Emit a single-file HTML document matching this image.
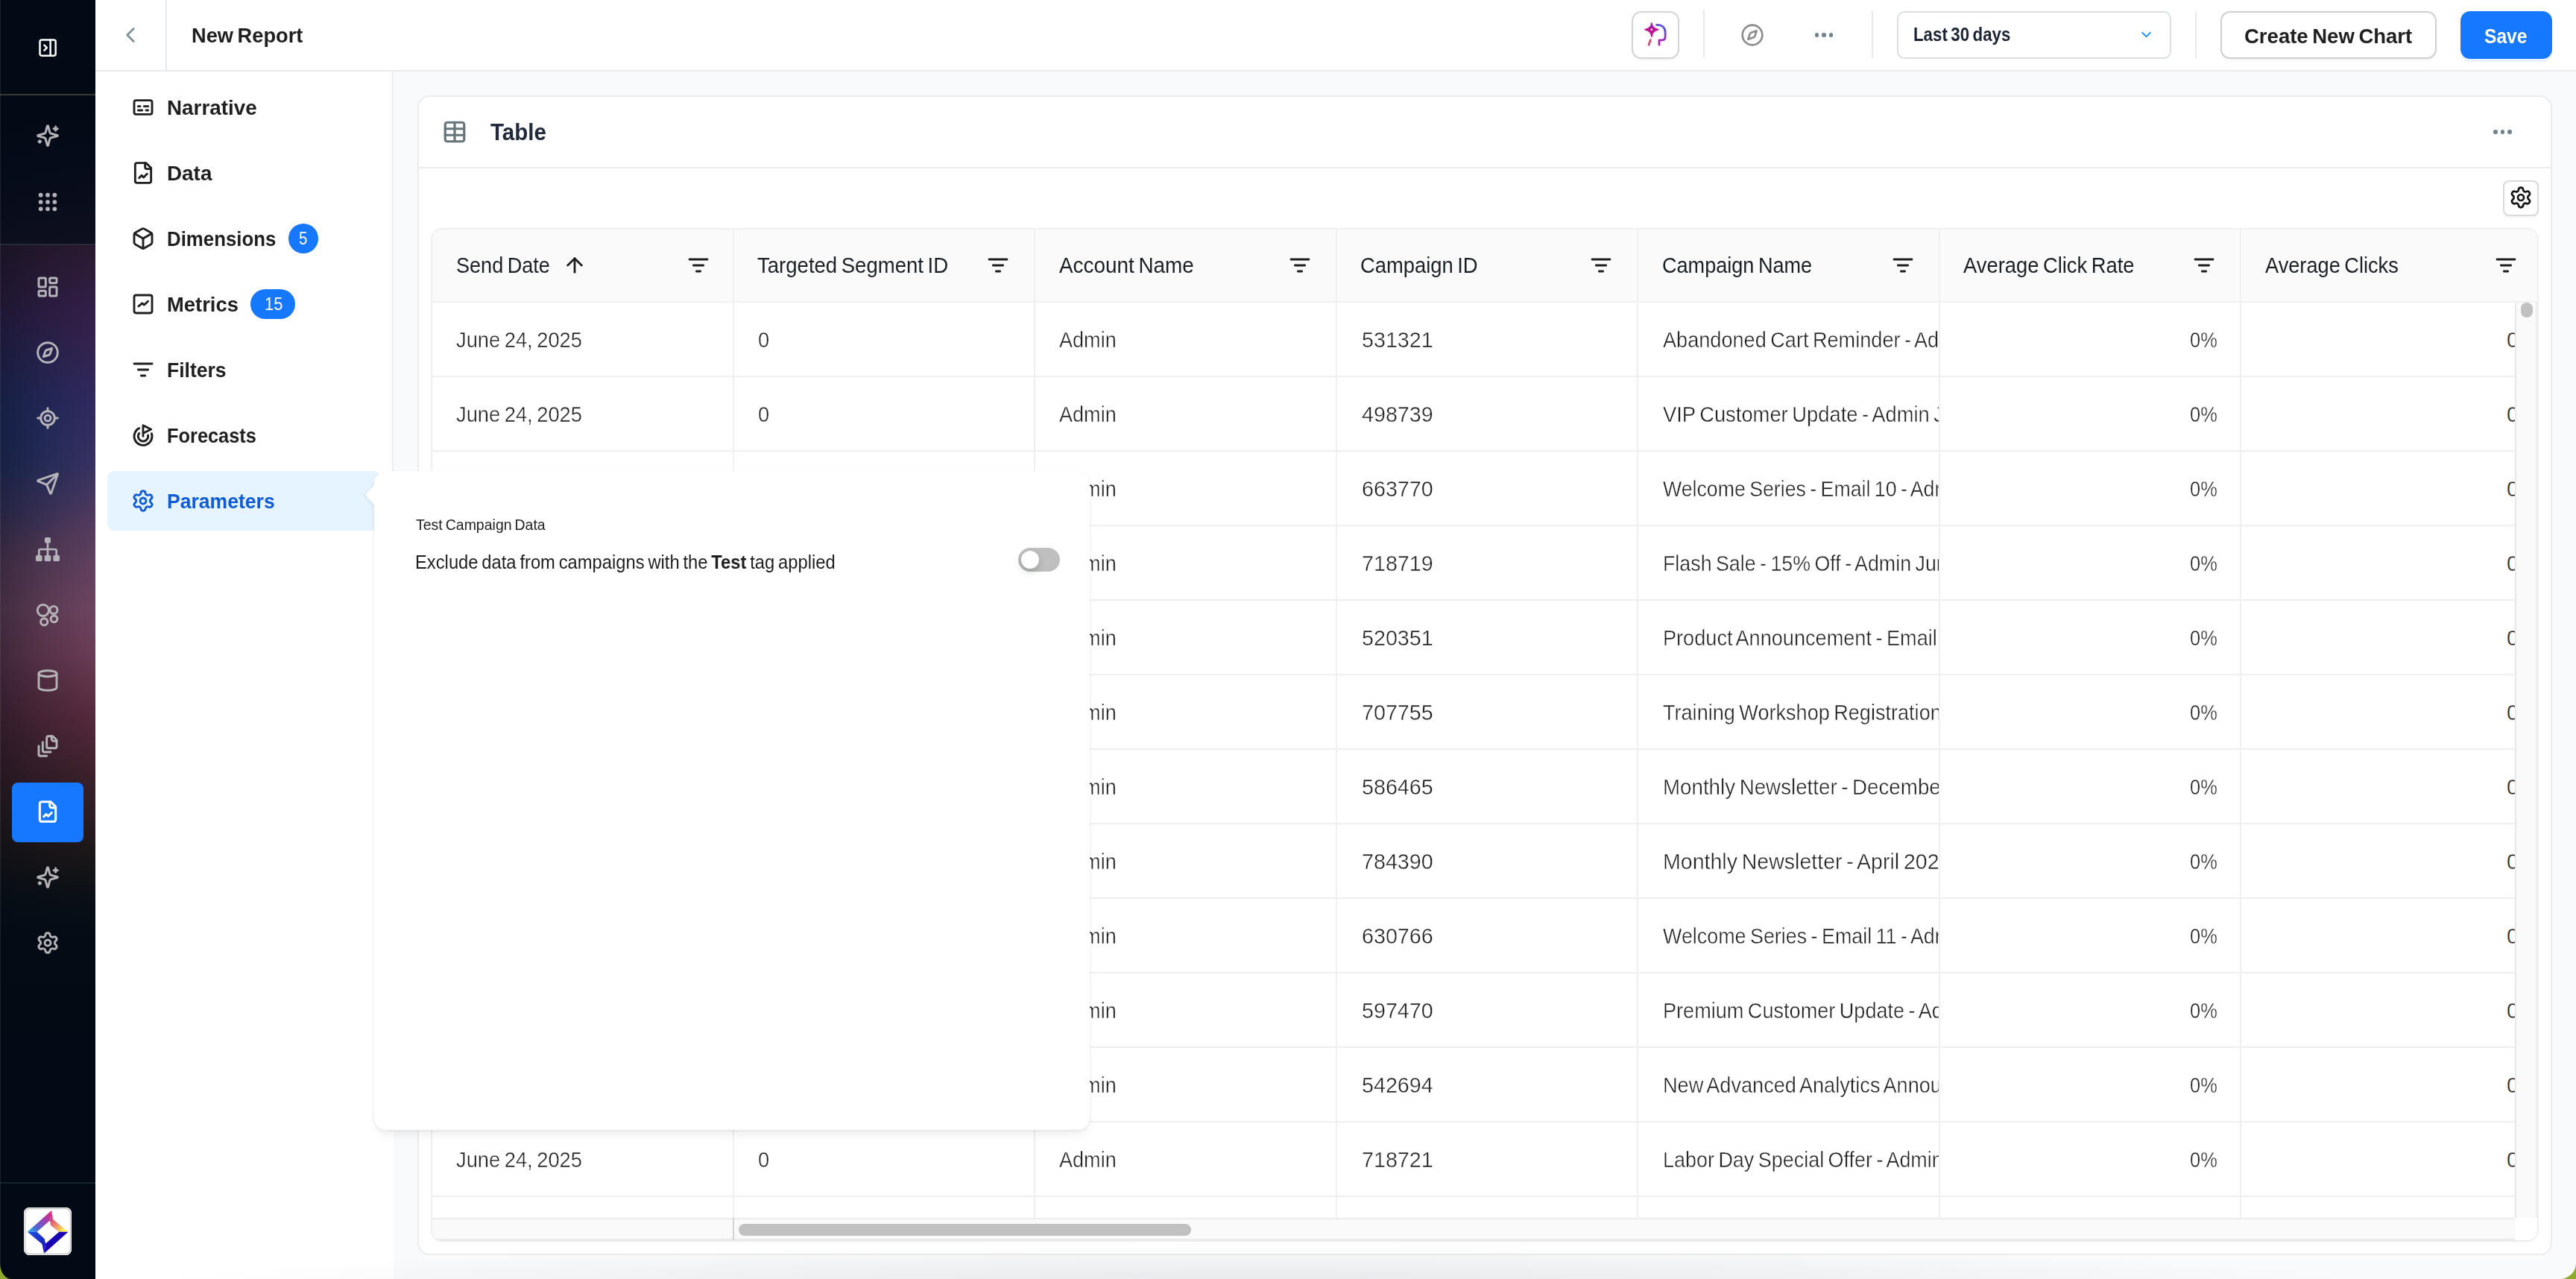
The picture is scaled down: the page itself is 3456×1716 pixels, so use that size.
<!DOCTYPE html>
<html lang="en"><head><meta charset="utf-8"><title>New Report</title>
<style>
*{box-sizing:border-box;margin:0;padding:0}
html,body{width:3456px;height:1716px;overflow:hidden;background:#f9fafb;font-family:"Liberation Sans",sans-serif}
body{position:relative}
.a{position:absolute}
.ic{position:absolute;display:block;overflow:visible}
.t{position:absolute;white-space:pre;line-height:1;word-spacing:-.075em;transform-origin:0 50%;display:block}
.lt{-webkit-text-stroke:.42px #fff}
.clip{position:absolute;overflow:hidden}
#side{left:0;top:0;width:128px;height:1716px;background:#020b15;overflow:hidden}
#sidegrad{left:0;top:328px;width:128px;height:1060px}
#hdr{left:128px;top:0;width:3328px;height:96px;background:#fff;border-bottom:2px solid #ebebeb}
#sub{left:128px;top:96px;width:400px;height:1620px;background:#fff}
#card{left:560px;top:128px;width:2864px;height:1556px;background:#fff;border:2px solid #ececec;border-radius:16px}
#cardhdr{left:562px;top:224px;width:2860px;height:2px;background:#ececec}
#tbl{left:578px;top:306px;width:2828px;height:1360px;background:#fff;border:2px solid #f0f0f0;border-bottom-color:#ebebeb;border-radius:15px;overflow:hidden}
.hl{position:absolute;background:#f0f0f0}
.vl{position:absolute;background:#f0f0f0;width:2px}
</style></head>
<body><div class="a" id="side"><div class="a" id="sidegrad" style="background:linear-gradient(90deg,rgba(4,10,20,.42) 0%,rgba(4,10,20,.2) 45%,rgba(4,10,20,0) 100%),radial-gradient(ellipse 150px 170px at 0px 250px,rgba(20,50,110,.6),rgba(20,50,110,0) 100%),linear-gradient(180deg,#2a1a30 0%,#33204a 9%,#33295c 20%,#3a3260 28%,#5a3e5e 38%,#6e4560 46%,#6a3c54 52%,#54293c 60%,#3a202a 68%,#2a1c20 73%,#1a1618 77.5%,#0a1016 82.5%,#030b14 88%,#020a14 100%)"></div><div class="a" style="left:0;top:128px;width:128px;height:200px;background:linear-gradient(170deg,#020a14 0%,#050b18 45%,#0e0f1f 100%)"></div><div class="a" style="left:0;top:126px;width:128px;height:2px;background:#3a3634"></div><div class="a" style="left:0;top:327px;width:128px;height:2px;background:#252a38"></div><div class="a" style="left:0;top:1586px;width:128px;height:2px;background:#18222b"></div><div class="a" style="left:0;top:0;width:1px;height:1716px;background:rgba(255,255,255,.09)"></div><svg class="ic" style="left:49.9px;top:49.9px;color:#ffffff" width="28.2" height="28.2" viewBox="0 0 24 24" fill="none" stroke="currentColor" stroke-width="2.1" stroke-linecap="round" stroke-linejoin="round"><rect width="18" height="18" x="3" y="3" rx="2"/><path d="M15 3v18"/><path d="m8 9 3 3-3 3"/></svg><svg class="ic" style="left:47.5px;top:166px;color:#b3b3b8" width="32" height="32" viewBox="0 0 24 24" fill="none" stroke="currentColor" stroke-width="2.2" stroke-linecap="round" stroke-linejoin="round"><path d="M9.937 15.5A2 2 0 0 0 8.5 14.063l-6.135-1.582a.5.5 0 0 1 0-.962L8.5 9.936A2 2 0 0 0 9.937 8.5l1.582-6.135a.5.5 0 0 1 .963 0L14.063 8.5A2 2 0 0 0 15.5 9.937l6.135 1.581a.5.5 0 0 1 0 .964L15.5 14.063a2 2 0 0 0-1.437 1.437l-1.582 6.135a.5.5 0 0 1-.963 0z"/><path d="M20 3v4"/><path d="M22 5h-4"/><path d="M4 17v2"/><path d="M5 18H3"/></svg><svg class="ic" style="left:48px;top:255px;color:#b3b3b8" width="32" height="32" viewBox="0 0 24 24" fill="none" stroke="currentColor" stroke-width="2" stroke-linecap="round" stroke-linejoin="round"><circle cx="5" cy="5" r="1.15" fill="currentColor"/><circle cx="12" cy="5" r="1.15" fill="currentColor"/><circle cx="19" cy="5" r="1.15" fill="currentColor"/><circle cx="5" cy="12" r="1.15" fill="currentColor"/><circle cx="12" cy="12" r="1.15" fill="currentColor"/><circle cx="19" cy="12" r="1.15" fill="currentColor"/><circle cx="5" cy="19" r="1.15" fill="currentColor"/><circle cx="12" cy="19" r="1.15" fill="currentColor"/><circle cx="19" cy="19" r="1.15" fill="currentColor"/></svg><svg class="ic" style="left:48px;top:369px;color:#b3b3b8" width="32" height="32" viewBox="0 0 24 24" fill="none" stroke="currentColor" stroke-width="2.2" stroke-linecap="round" stroke-linejoin="round"><rect width="7" height="9" x="3" y="3" rx="1"/><rect width="7" height="5" x="14" y="3" rx="1"/><rect width="7" height="9" x="14" y="12" rx="1"/><rect width="7" height="5" x="3" y="16" rx="1"/></svg><svg class="ic" style="left:48px;top:457px;color:#b3b3b8" width="32" height="32" viewBox="0 0 24 24" fill="none" stroke="currentColor" stroke-width="2.2" stroke-linecap="round" stroke-linejoin="round"><circle cx="12" cy="12" r="10"/><path d="m16.24 7.76-1.804 5.411a2 2 0 0 1-1.265 1.265L7.76 16.24l1.804-5.411a2 2 0 0 1 1.265-1.265z"/></svg><svg class="ic" style="left:48px;top:545px;color:#b3b3b8" width="32" height="32" viewBox="0 0 24 24" fill="none" stroke="currentColor" stroke-width="2.2" stroke-linecap="round" stroke-linejoin="round"><line x1="2" x2="5" y1="12" y2="12"/><line x1="19" x2="22" y1="12" y2="12"/><line x1="12" x2="12" y1="2" y2="5"/><line x1="12" x2="12" y1="19" y2="22"/><circle cx="12" cy="12" r="7"/><circle cx="12" cy="12" r="3"/></svg><svg class="ic" style="left:48px;top:633px;color:#b3b3b8" width="32" height="32" viewBox="0 0 24 24" fill="none" stroke="currentColor" stroke-width="2.2" stroke-linecap="round" stroke-linejoin="round"><path d="M14.536 21.686a.5.5 0 0 0 .937-.024l6.5-19a.496.496 0 0 0-.635-.635l-19 6.5a.5.5 0 0 0-.024.937l7.93 3.18a2 2 0 0 1 1.112 1.11z"/><path d="m21.854 2.147-10.94 10.939"/></svg><svg class="ic" style="left:48px;top:721px;color:#b3b3b8" width="32" height="32" viewBox="0 0 32 32" fill="none" stroke="currentColor" stroke-width="2" stroke-linecap="round" stroke-linejoin="round"><rect x="12" y="0" width="8" height="7.6" rx="1.6" fill="currentColor" stroke="none"/><rect x="0" y="24" width="8.6" height="8" rx="1.6" fill="currentColor" stroke="none"/><rect x="11.7" y="24" width="8.6" height="8" rx="1.6" fill="currentColor" stroke="none"/><rect x="23.4" y="24" width="8.6" height="8" rx="1.6" fill="currentColor" stroke="none"/><path d="M16 7v17M4.3 24v-6a2 2 0 0 1 2-2h19.4a2 2 0 0 1 2 2v6" stroke-width="2.7"/></svg><svg class="ic" style="left:48px;top:809px;color:#b3b3b8" width="32" height="32" viewBox="0 0 24 24" fill="none" stroke="currentColor" stroke-width="2.2" stroke-linecap="round" stroke-linejoin="round"><circle cx="7.4" cy="7.4" r="5.7"/><circle cx="18" cy="7.05" r="3.75"/><circle cx="18.4" cy="16" r="3.3"/><circle cx="8.4" cy="19" r="3.45"/></svg><svg class="ic" style="left:48px;top:897px;color:#b3b3b8" width="32" height="32" viewBox="0 0 24 24" fill="none" stroke="currentColor" stroke-width="2.2" stroke-linecap="round" stroke-linejoin="round"><ellipse cx="12" cy="5" rx="9" ry="3"/><path d="M3 5v14a9 3 0 0 0 18 0V5"/></svg><svg class="ic" style="left:48px;top:985px;color:#b3b3b8" width="32" height="32" viewBox="0 0 24 24" fill="none" stroke="currentColor" stroke-width="2.2" stroke-linecap="round" stroke-linejoin="round"><path d="M21 7h-3a2 2 0 0 1-2-2V2"/><path d="M21 6v6.5c0 .8-.7 1.5-1.5 1.5h-7c-.8 0-1.5-.7-1.5-1.5v-9c0-.8.7-1.5 1.5-1.5H17Z"/><path d="M7 8v8.8c0 .3.2.6.4.8.2.2.5.4.8.4H15"/><path d="M3 12v8.800c0 .3.2.6.4.8.2.2.5.4.8.4H11"/></svg><div class="a" style="left:16px;top:1050px;width:96px;height:80px;border-radius:8px;background:#1677ff"></div><svg class="ic" style="left:48px;top:1073px;color:#ffffff" width="32" height="32" viewBox="0 0 24 24" fill="none" stroke="currentColor" stroke-width="2.3" stroke-linecap="round" stroke-linejoin="round"><path d="M15 2H6a2 2 0 0 0-2 2v16a2 2 0 0 0 2 2h12a2 2 0 0 0 2-2V7Z"/><path d="M14 2v4a2 2 0 0 0 2 2h4"/><path d="m16 13-3.5 3.5-2-2L8 17"/></svg><svg class="ic" style="left:48px;top:1161px;color:#b3b3b8" width="32" height="32" viewBox="0 0 24 24" fill="none" stroke="currentColor" stroke-width="2.2" stroke-linecap="round" stroke-linejoin="round"><path d="M9.937 15.5A2 2 0 0 0 8.5 14.063l-6.135-1.582a.5.5 0 0 1 0-.962L8.5 9.936A2 2 0 0 0 9.937 8.5l1.582-6.135a.5.5 0 0 1 .963 0L14.063 8.5A2 2 0 0 0 15.5 9.937l6.135 1.581a.5.5 0 0 1 0 .964L15.5 14.063a2 2 0 0 0-1.437 1.437l-1.582 6.135a.5.5 0 0 1-.963 0z"/><path d="M20 3v4"/><path d="M22 5h-4"/><path d="M4 17v2"/><path d="M5 18H3"/></svg><svg class="ic" style="left:48px;top:1249px;color:#b3b3b8" width="32" height="32" viewBox="0 0 24 24" fill="none" stroke="currentColor" stroke-width="2.2" stroke-linecap="round" stroke-linejoin="round"><path d="M9.671 4.136a2.34 2.34 0 0 1 4.659 0 2.34 2.34 0 0 0 3.319 1.915 2.34 2.34 0 0 1 2.33 4.033 2.34 2.34 0 0 0 0 3.831 2.34 2.34 0 0 1-2.33 4.033 2.34 2.34 0 0 0-3.319 1.915 2.34 2.34 0 0 1-4.659 0 2.34 2.34 0 0 0-3.32-1.915 2.34 2.34 0 0 1-2.33-4.033 2.34 2.34 0 0 0 0-3.831A2.34 2.34 0 0 1 6.35 6.051a2.34 2.34 0 0 0 3.319-1.915"/><circle cx="12" cy="12" r="3"/></svg><div class="a" style="left:32px;top:1620px;width:64px;height:64px;border-radius:8px;background:#fff;box-shadow:inset 0 0 0 .8px #fff,inset 0 0 0 2.2px #c4c4c4"></div><svg class="ic" style="left:32px;top:1620px" width="64" height="64" viewBox="0 0 64 64"><defs><linearGradient id="lg1" gradientUnits="userSpaceOnUse" x1="5" y1="33" x2="37" y2="8"><stop offset="0" stop-color="#18b4f4"/><stop offset=".3" stop-color="#4a6ad0"/><stop offset=".7" stop-color="#a040b0"/><stop offset="1" stop-color="#d8287c"/></linearGradient><linearGradient id="lg2" gradientUnits="userSpaceOnUse" x1="36" y1="12" x2="58" y2="33"><stop offset="0" stop-color="#d42f80"/><stop offset=".5" stop-color="#ee9a6a"/><stop offset=".85" stop-color="#fdf254"/><stop offset="1" stop-color="#ffff50"/></linearGradient><linearGradient id="lg3" gradientUnits="userSpaceOnUse" x1="6" y1="33" x2="28" y2="58"><stop offset="0" stop-color="#1a50d8"/><stop offset="1" stop-color="#1a12c0"/></linearGradient></defs><path d="M4.8 32.7 L37.2 3.9 L34.9 17.5 L17.5 32.7Z" fill="url(#lg1)"/><path d="M37.2 3.9 L39.1 15.9 L59.5 32.7 L47.3 32.7 L36.1 23.9 L34.9 17.5Z" fill="url(#lg2)"/><path d="M4.8 32.7 L17.5 32.7 L27.6 42 L29.2 48.4 L27.1 61.7 L24.4 48.9Z" fill="url(#lg3)"/><path d="M59.5 32.7 L47.3 32.7 L29.2 48.4 L27.1 61.7Z" fill="#1a00b4"/></svg><svg class="ic" style="left:0;top:1695px" width="15" height="21" viewBox="0 0 15 21"><path d="M0 0 A15 21 0 0 0 15 21 L0 21Z" fill="#8fab2e"/></svg></div><div class="a" id="hdr"></div><div class="a" style="left:222px;top:0;width:2px;height:94px;background:#e4ecef"></div><svg class="ic" style="left:158.4px;top:30.2px;color:#7b919a" width="34" height="34" viewBox="0 0 24 24" fill="none" stroke="currentColor" stroke-width="1.9" stroke-linecap="round" stroke-linejoin="round"><path d="m15 18-6-6 6-6"/></svg><span class="t " style="left:256.8px;top:33.28px;font-size:28.5px;font-weight:700;color:#1f1f1f;transform:scaleX(0.9564);">New Report</span><div class="a" style="left:2189px;top:15px;width:64px;height:64px;border:2px solid #d2d4d6;border-radius:13px;background:#fff;box-shadow:0 3px 2px rgba(0,0,0,.035)"></div><svg class="ic" style="left:2189px;top:15px" width="64" height="64" viewBox="0 0 64 64" fill="none" stroke-linecap="round" stroke-linejoin="round"><defs><linearGradient id="ai1" gradientUnits="userSpaceOnUse" x1="46" y1="18" x2="20" y2="46"><stop offset="0" stop-color="#3a62e6"/><stop offset=".45" stop-color="#9a30c0"/><stop offset="1" stop-color="#d0108a"/></linearGradient><linearGradient id="ai2" gradientUnits="userSpaceOnUse" x1="27" y1="15" x2="27" y2="35"><stop offset="0" stop-color="#8a30c0"/><stop offset=".5" stop-color="#c41092"/><stop offset="1" stop-color="#c8108c"/></linearGradient></defs><path d="M26.9 15.8 C27.7 20.8 29.6 23.1 35.8 24.7 C29.6 26.3 27.7 28.8 26.9 34.2 C26.1 28.8 24.2 26.3 18 24.7 C24.2 23.1 26.1 20.8 26.9 15.8Z" fill="url(#ai2)" stroke="url(#ai2)" stroke-width="1.6"/><circle cx="26.9" cy="24.7" r="1.3" fill="#fff"/><path d="M33.6 18.4 C40.6 17.8 45.1 22 45.1 28 L45.1 34.3 C45.1 37.3 43.4 38.8 41 38.8 L37 38.8 L37 45.2" stroke="url(#ai1)" stroke-width="2.8"/><path d="M25.3 38.6 L23 45.2" stroke="#e2446e" stroke-width="2.8"/></svg><div class="a" style="left:2285px;top:13px;width:2px;height:64px;background:#e9e9ea"></div><div class="a" style="left:2511px;top:15px;width:2px;height:63px;background:#e9e9ea"></div><div class="a" style="left:2945px;top:15px;width:2px;height:63px;background:#e9e9ea"></div><svg class="ic" style="left:2334.8px;top:30.9px;color:#8c8c8c" width="32" height="32" viewBox="0 0 24 24" fill="none" stroke="currentColor" stroke-width="2" stroke-linecap="round" stroke-linejoin="round"><circle cx="12" cy="12" r="10"/><path d="m16.24 7.76-1.804 5.411a2 2 0 0 1-1.265 1.265L7.76 16.24l1.804-5.411a2 2 0 0 1 1.265-1.265z"/></svg><div class="a" style="left:2434.8px;top:44.1px;width:5.6px;height:5.6px;border-radius:50%;background:#6f848c"></div><div class="a" style="left:2444.1px;top:44.1px;width:5.6px;height:5.6px;border-radius:50%;background:#6f848c"></div><div class="a" style="left:2453.5px;top:44.1px;width:5.6px;height:5.6px;border-radius:50%;background:#6f848c"></div><div class="a" style="left:2545px;top:15px;width:368px;height:64px;border:2px solid #dcdfe2;border-radius:10px;background:#fff"></div><span class="t " style="left:2566.8px;top:34.44px;font-size:25.6px;font-weight:700;color:#1c2333;transform:scaleX(0.8704);">Last 30 days</span><svg class="ic" style="left:2868.5px;top:35.8px;color:#1890ff" width="21" height="21" viewBox="0 0 24 24" fill="none" stroke="currentColor" stroke-width="2.3" stroke-linecap="round" stroke-linejoin="round"><path d="m6 9 6 6 6-6"/></svg><div class="a" style="left:2979px;top:15px;width:290px;height:64px;border:2px solid #cfcfcf;border-radius:13px;background:#fff;box-shadow:0 3px 2px rgba(0,0,0,.035)"></div><span class="t " style="left:3011.25px;top:33.78px;font-size:28.5px;font-weight:700;color:#1f1f1f;transform:scaleX(0.9654);">Create New Chart</span><div class="a" style="left:3301px;top:15px;width:123px;height:64px;border-radius:13px;background:#1677ff;box-shadow:0 4px 1px rgba(22,119,255,.10)"></div><span class="t " style="left:3333.25px;top:33.78px;font-size:28.5px;font-weight:700;color:#ffffff;transform:scaleX(0.8638);">Save</span><div class="a" id="sub"></div><div class="a" style="left:526px;top:96px;width:2px;height:1300px;background:#eeeeee"></div><div class="a" style="left:144px;top:632px;width:366px;height:80px;border-radius:9px;background:#e6f4ff"></div><svg class="ic" style="left:176px;top:128px;color:#1f1f1f" width="32" height="32" viewBox="0 0 24 24" fill="none" stroke="currentColor" stroke-width="2.15" stroke-linecap="round" stroke-linejoin="round"><rect width="18" height="14" x="3" y="5" rx="2" ry="2"/><path d="M7 15h4M15 15h2M7 11h2M13 11h4"/></svg><span class="t " style="left:223.8px;top:130.18px;font-size:28.5px;font-weight:700;color:#1f1f1f;transform:scaleX(0.9759);">Narrative</span><svg class="ic" style="left:176px;top:216px;color:#1f1f1f" width="32" height="32" viewBox="0 0 24 24" fill="none" stroke="currentColor" stroke-width="2.15" stroke-linecap="round" stroke-linejoin="round"><path d="M15 2H6a2 2 0 0 0-2 2v16a2 2 0 0 0 2 2h12a2 2 0 0 0 2-2V7Z"/><path d="M14 2v4a2 2 0 0 0 2 2h4"/><path d="m16 13-3.5 3.5-2-2L8 17"/></svg><span class="t " style="left:223.8px;top:218.18px;font-size:28.5px;font-weight:700;color:#1f1f1f;transform:scaleX(0.9776);">Data</span><svg class="ic" style="left:176px;top:304px;color:#1f1f1f" width="32" height="32" viewBox="0 0 24 24" fill="none" stroke="currentColor" stroke-width="2.15" stroke-linecap="round" stroke-linejoin="round"><path d="M21 8a2 2 0 0 0-1-1.73l-7-4a2 2 0 0 0-2 0l-7 4A2 2 0 0 0 3 8v8a2 2 0 0 0 1 1.73l7 4a2 2 0 0 0 2 0l7-4A2 2 0 0 0 21 16Z"/><path d="m3.3 7 8.7 5 8.7-5"/><path d="M12 22V12"/></svg><span class="t " style="left:223.8px;top:306.17px;font-size:28.5px;font-weight:700;color:#1f1f1f;transform:scaleX(0.9062);">Dimensions</span><svg class="ic" style="left:176px;top:392px;color:#1f1f1f" width="32" height="32" viewBox="0 0 24 24" fill="none" stroke="currentColor" stroke-width="2.15" stroke-linecap="round" stroke-linejoin="round"><rect width="18" height="18" x="3" y="3" rx="2"/><path d="M7.4 14.1l3.7-3 2 1.7 3.8-3.6"/></svg><span class="t " style="left:223.8px;top:394.17px;font-size:28.5px;font-weight:700;color:#1f1f1f;transform:scaleX(0.9610);">Metrics</span><svg class="ic" style="left:176px;top:480px;color:#1f1f1f" width="32" height="32" viewBox="0 0 24 24" fill="none" stroke="currentColor" stroke-width="2.15" stroke-linecap="round" stroke-linejoin="round"><path d="M3 6h18"/><path d="M7 12h10"/><path d="M10 18h4"/></svg><span class="t " style="left:223.8px;top:482.17px;font-size:28.5px;font-weight:700;color:#1f1f1f;transform:scaleX(0.9307);">Filters</span><svg class="ic" style="left:176px;top:568px;color:#1f1f1f" width="32" height="32" viewBox="0 0 24 24" fill="none" stroke="currentColor" stroke-width="2.15" stroke-linecap="round" stroke-linejoin="round"><path d="M12 13V2l8 4-8 4"/><path d="M20.561 10.222a9 9 0 1 1-12.55-5.29"/><path d="M8.002 9.997a5 5 0 1 0 8.9 2.02"/></svg><span class="t " style="left:223.8px;top:570.17px;font-size:28.5px;font-weight:700;color:#1f1f1f;transform:scaleX(0.8904);">Forecasts</span><svg class="ic" style="left:176px;top:656px;color:#0f5bd8" width="32" height="32" viewBox="0 0 24 24" fill="none" stroke="currentColor" stroke-width="2.15" stroke-linecap="round" stroke-linejoin="round"><path d="M9.671 4.136a2.34 2.34 0 0 1 4.659 0 2.34 2.34 0 0 0 3.319 1.915 2.34 2.34 0 0 1 2.33 4.033 2.34 2.34 0 0 0 0 3.831 2.34 2.34 0 0 1-2.33 4.033 2.34 2.34 0 0 0-3.319 1.915 2.34 2.34 0 0 1-4.659 0 2.34 2.34 0 0 0-3.32-1.915 2.34 2.34 0 0 1-2.33-4.033 2.34 2.34 0 0 0 0-3.831A2.34 2.34 0 0 1 6.35 6.051a2.34 2.34 0 0 0 3.319-1.915"/><circle cx="12" cy="12" r="3"/></svg><span class="t " style="left:223.8px;top:658.17px;font-size:28.5px;font-weight:700;color:#0f5bd8;transform:scaleX(0.9319);">Parameters</span><div class="a" style="left:387px;top:300px;width:40px;height:40px;border-radius:20px;background:#1677ff"></div><span class="t " style="left:401.2px;top:307.78px;font-size:24.5px;font-weight:400;color:#fff;transform:scaleX(0.8357);">5</span><div class="a" style="left:336px;top:388px;width:60px;height:40px;border-radius:20px;background:#1677ff"></div><span class="t " style="left:355px;top:395.78px;font-size:24.5px;font-weight:400;color:#fff;transform:scaleX(0.8949);">15</span><div class="a" id="card"></div><div class="a" id="cardhdr"></div><svg class="ic" style="left:593px;top:159.7px;color:#66757b" width="34" height="34" viewBox="0 0 24 24" fill="none" stroke="currentColor" stroke-width="2.25" stroke-linecap="round" stroke-linejoin="round"><path d="M12 3v18"/><rect width="18" height="18" x="3" y="3" rx="2"/><path d="M3 9h18"/><path d="M3 15h18"/></svg><span class="t " style="left:658px;top:161.54px;font-size:31.6px;font-weight:700;color:#212a3a;transform:scaleX(0.9355);">Table</span><div class="a" style="left:3345.4px;top:174px;width:5.6px;height:5.6px;border-radius:50%;background:#6f848c"></div><div class="a" style="left:3354.8px;top:174px;width:5.6px;height:5.6px;border-radius:50%;background:#6f848c"></div><div class="a" style="left:3364.2px;top:174px;width:5.6px;height:5.6px;border-radius:50%;background:#6f848c"></div><div class="a" style="left:3358px;top:242px;width:48px;height:48px;border:2px solid #d9d9d9;border-radius:8px;background:#fff;box-shadow:0 3px 1px rgba(0,0,0,.03)"></div><svg class="ic" style="left:3366px;top:248.9px;color:#141414" width="32" height="32" viewBox="0 0 24 24" fill="none" stroke="currentColor" stroke-width="2.05" stroke-linecap="round" stroke-linejoin="round"><path d="M9.671 4.136a2.34 2.34 0 0 1 4.659 0 2.34 2.34 0 0 0 3.319 1.915 2.34 2.34 0 0 1 2.33 4.033 2.34 2.34 0 0 0 0 3.831 2.34 2.34 0 0 1-2.33 4.033 2.34 2.34 0 0 0-3.319 1.915 2.34 2.34 0 0 1-4.659 0 2.34 2.34 0 0 0-3.32-1.915 2.34 2.34 0 0 1-2.33-4.033 2.34 2.34 0 0 0 0-3.831A2.34 2.34 0 0 1 6.35 6.051a2.34 2.34 0 0 0 3.319-1.915"/><circle cx="12" cy="12" r="3"/></svg><div class="a" id="tbl"><div class="a" style="left:0px;top:-1px;width:2824px;height:97px;background:#fafafa;"></div><div class="a" style="left:0px;top:96px;width:2824px;height:2px;background:#f0f0f0;"></div><div class="a" style="left:0px;top:196px;width:2795px;height:2px;background:#f0f0f0;"></div><div class="a" style="left:0px;top:296px;width:2795px;height:2px;background:#f0f0f0;"></div><div class="a" style="left:0px;top:396px;width:2795px;height:2px;background:#f0f0f0;"></div><div class="a" style="left:0px;top:496px;width:2795px;height:2px;background:#f0f0f0;"></div><div class="a" style="left:0px;top:596px;width:2795px;height:2px;background:#f0f0f0;"></div><div class="a" style="left:0px;top:696px;width:2795px;height:2px;background:#f0f0f0;"></div><div class="a" style="left:0px;top:796px;width:2795px;height:2px;background:#f0f0f0;"></div><div class="a" style="left:0px;top:896px;width:2795px;height:2px;background:#f0f0f0;"></div><div class="a" style="left:0px;top:996px;width:2795px;height:2px;background:#f0f0f0;"></div><div class="a" style="left:0px;top:1096px;width:2795px;height:2px;background:#f0f0f0;"></div><div class="a" style="left:0px;top:1196px;width:2795px;height:2px;background:#f0f0f0;"></div><div class="a" style="left:0px;top:1296px;width:2795px;height:2px;background:#f0f0f0;"></div><div class="a" style="left:402.5px;top:-1px;width:2px;height:1328px;background:#f0f0f0;"></div><div class="a" style="left:807px;top:-1px;width:2px;height:1328px;background:#f0f0f0;"></div><div class="a" style="left:1211.5px;top:-1px;width:2px;height:1328px;background:#f0f0f0;"></div><div class="a" style="left:1616px;top:-1px;width:2px;height:1328px;background:#f0f0f0;"></div><div class="a" style="left:2020.5px;top:-1px;width:2px;height:1328px;background:#f0f0f0;"></div><div class="a" style="left:2425px;top:-1px;width:2px;height:1328px;background:#f0f0f0;"></div><div class="a" style="left:2794px;top:98px;width:30px;height:1229px;background:#fafafa;border-left:2px solid #e8e8e8;border-right:2px solid #ededed"></div><div class="a" style="left:2801.5px;top:98px;width:16px;height:19.5px;background:#c1c1c1;border-radius:8px"></div><div class="a" style="left:0px;top:1326px;width:2795px;height:30px;background:#fafafa;border-top:2px solid #ececec;border-bottom:2px solid #ebebeb"></div><div class="a" style="left:402.5px;top:1326px;width:2px;height:30px;background:#d4d4d4;"></div><div class="a" style="left:411px;top:1334px;width:607px;height:16px;background:#c1c1c1;border-radius:8px"></div><div class="a" style="left:2794px;top:1326px;width:30px;height:30px;background:#ffffff;"></div><span class="t " style="left:31.8px;top:34.37px;font-size:29.1px;font-weight:400;color:#1c2024;transform:scaleX(0.9297);">Send Date</span><svg class="ic" style="left:340.6px;top:31.8px;color:#1f1f1f" width="32" height="32" viewBox="0 0 24 24" fill="none" stroke="currentColor" stroke-width="2.1" stroke-linecap="round" stroke-linejoin="round"><path d="M3 6h18"/><path d="M7 12h10"/><path d="M10 18h4"/></svg><span class="t " style="left:436.3px;top:34.37px;font-size:29.1px;font-weight:400;color:#1c2024;transform:scaleX(0.9465);">Targeted Segment ID</span><svg class="ic" style="left:743.4px;top:31.8px;color:#1f1f1f" width="32" height="32" viewBox="0 0 24 24" fill="none" stroke="currentColor" stroke-width="2.1" stroke-linecap="round" stroke-linejoin="round"><path d="M3 6h18"/><path d="M7 12h10"/><path d="M10 18h4"/></svg><span class="t " style="left:840.8px;top:34.37px;font-size:29.1px;font-weight:400;color:#1c2024;transform:scaleX(0.9584);">Account Name</span><svg class="ic" style="left:1148.1px;top:31.8px;color:#1f1f1f" width="32" height="32" viewBox="0 0 24 24" fill="none" stroke="currentColor" stroke-width="2.1" stroke-linecap="round" stroke-linejoin="round"><path d="M3 6h18"/><path d="M7 12h10"/><path d="M10 18h4"/></svg><span class="t " style="left:1245.3px;top:34.37px;font-size:29.1px;font-weight:400;color:#1c2024;transform:scaleX(0.9403);">Campaign ID</span><svg class="ic" style="left:1552.3px;top:31.8px;color:#1f1f1f" width="32" height="32" viewBox="0 0 24 24" fill="none" stroke="currentColor" stroke-width="2.1" stroke-linecap="round" stroke-linejoin="round"><path d="M3 6h18"/><path d="M7 12h10"/><path d="M10 18h4"/></svg><span class="t " style="left:1649.8px;top:34.37px;font-size:29.1px;font-weight:400;color:#1c2024;transform:scaleX(0.9305);">Campaign Name</span><svg class="ic" style="left:1957.3px;top:31.8px;color:#1f1f1f" width="32" height="32" viewBox="0 0 24 24" fill="none" stroke="currentColor" stroke-width="2.1" stroke-linecap="round" stroke-linejoin="round"><path d="M3 6h18"/><path d="M7 12h10"/><path d="M10 18h4"/></svg><span class="t " style="left:2054.3px;top:34.37px;font-size:29.1px;font-weight:400;color:#1c2024;transform:scaleX(0.9400);">Average Click Rate</span><svg class="ic" style="left:2361.4px;top:31.8px;color:#1f1f1f" width="32" height="32" viewBox="0 0 24 24" fill="none" stroke="currentColor" stroke-width="2.1" stroke-linecap="round" stroke-linejoin="round"><path d="M3 6h18"/><path d="M7 12h10"/><path d="M10 18h4"/></svg><span class="t " style="left:2458.8px;top:34.37px;font-size:29.1px;font-weight:400;color:#1c2024;transform:scaleX(0.9345);">Average Clicks</span><svg class="ic" style="left:2766.3px;top:31.8px;color:#1f1f1f" width="32" height="32" viewBox="0 0 24 24" fill="none" stroke="currentColor" stroke-width="2.1" stroke-linecap="round" stroke-linejoin="round"><path d="M3 6h18"/><path d="M7 12h10"/><path d="M10 18h4"/></svg><svg class="ic" style="left:175px;top:31.6px;color:#1f1f1f" width="32" height="32" viewBox="0 0 24 24" fill="none" stroke="currentColor" stroke-width="2.1" stroke-linecap="round" stroke-linejoin="round"><path d="m5 12 7-7 7 7"/><path d="M12 19V5"/></svg><span class="t lt" style="left:31.9px;top:134.25px;font-size:29px;font-weight:400;color:#222222;transform:scaleX(0.9416);">June 24, 2025</span><span class="t lt" style="left:437px;top:134.25px;font-size:29px;font-weight:400;color:#222222;transform:scaleX(0.9417);">0</span><span class="t lt" style="left:841.4px;top:134.25px;font-size:29px;font-weight:400;color:#222222;transform:scaleX(0.9331);">Admin</span><span class="t lt" style="left:1246.8px;top:134.25px;font-size:29px;font-weight:400;color:#222222;transform:scaleX(0.9888);">531321</span><div class="clip" style="left:1618px;top:108.9px;width:402.8px;height:100px"><span class="t lt" style="left:32.7px;top:25.35px;font-size:29px;font-weight:400;color:#222222;transform:scaleX(0.9350);">Abandoned Cart Reminder - Admin June</span></div><span class="t lt" style="left:2357.8px;top:134.25px;font-size:29px;font-weight:400;color:#222222;transform:scaleX(0.8778);">0%</span><div class="clip" style="left:2720px;top:108.9px;width:74px;height:100px"><span class="t lt" style="left:63px;top:25.35px;font-size:29px;color:#222222">0</span></div><span class="t lt" style="left:31.9px;top:234.25px;font-size:29px;font-weight:400;color:#222222;transform:scaleX(0.9416);">June 24, 2025</span><span class="t lt" style="left:437px;top:234.25px;font-size:29px;font-weight:400;color:#222222;transform:scaleX(0.9417);">0</span><span class="t lt" style="left:841.4px;top:234.25px;font-size:29px;font-weight:400;color:#222222;transform:scaleX(0.9331);">Admin</span><span class="t lt" style="left:1246.8px;top:234.25px;font-size:29px;font-weight:400;color:#222222;transform:scaleX(0.9888);">498739</span><div class="clip" style="left:1618px;top:208.9px;width:402.8px;height:100px"><span class="t lt" style="left:32.7px;top:25.35px;font-size:29px;font-weight:400;color:#222222;transform:scaleX(0.9433);">VIP Customer Update - Admin June 2025</span></div><span class="t lt" style="left:2357.8px;top:234.25px;font-size:29px;font-weight:400;color:#222222;transform:scaleX(0.8778);">0%</span><div class="clip" style="left:2720px;top:208.9px;width:74px;height:100px"><span class="t lt" style="left:63px;top:25.35px;font-size:29px;color:#222222">0</span></div><span class="t lt" style="left:31.9px;top:334.25px;font-size:29px;font-weight:400;color:#222222;transform:scaleX(0.9416);">June 24, 2025</span><span class="t lt" style="left:437px;top:334.25px;font-size:29px;font-weight:400;color:#222222;transform:scaleX(0.9417);">0</span><span class="t lt" style="left:841.4px;top:334.25px;font-size:29px;font-weight:400;color:#222222;transform:scaleX(0.9331);">Admin</span><span class="t lt" style="left:1246.8px;top:334.25px;font-size:29px;font-weight:400;color:#222222;transform:scaleX(0.9888);">663770</span><div class="clip" style="left:1618px;top:308.9px;width:402.8px;height:100px"><span class="t lt" style="left:32.7px;top:25.35px;font-size:29px;font-weight:400;color:#222222;transform:scaleX(0.9207);">Welcome Series - Email 10 - Admin June</span></div><span class="t lt" style="left:2357.8px;top:334.25px;font-size:29px;font-weight:400;color:#222222;transform:scaleX(0.8778);">0%</span><div class="clip" style="left:2720px;top:308.9px;width:74px;height:100px"><span class="t lt" style="left:63px;top:25.35px;font-size:29px;color:#222222">0</span></div><span class="t lt" style="left:31.9px;top:434.25px;font-size:29px;font-weight:400;color:#222222;transform:scaleX(0.9416);">June 24, 2025</span><span class="t lt" style="left:437px;top:434.25px;font-size:29px;font-weight:400;color:#222222;transform:scaleX(0.9417);">0</span><span class="t lt" style="left:841.4px;top:434.25px;font-size:29px;font-weight:400;color:#222222;transform:scaleX(0.9331);">Admin</span><span class="t lt" style="left:1246.8px;top:434.25px;font-size:29px;font-weight:400;color:#222222;transform:scaleX(0.9888);">718719</span><div class="clip" style="left:1618px;top:408.9px;width:402.8px;height:100px"><span class="t lt" style="left:32.7px;top:25.35px;font-size:29px;font-weight:400;color:#222222;transform:scaleX(0.9242);">Flash Sale - 15% Off - Admin June 2025</span></div><span class="t lt" style="left:2357.8px;top:434.25px;font-size:29px;font-weight:400;color:#222222;transform:scaleX(0.8778);">0%</span><div class="clip" style="left:2720px;top:408.9px;width:74px;height:100px"><span class="t lt" style="left:63px;top:25.35px;font-size:29px;color:#222222">0</span></div><span class="t lt" style="left:31.9px;top:534.25px;font-size:29px;font-weight:400;color:#222222;transform:scaleX(0.9416);">June 24, 2025</span><span class="t lt" style="left:437px;top:534.25px;font-size:29px;font-weight:400;color:#222222;transform:scaleX(0.9417);">0</span><span class="t lt" style="left:841.4px;top:534.25px;font-size:29px;font-weight:400;color:#222222;transform:scaleX(0.9331);">Admin</span><span class="t lt" style="left:1246.8px;top:534.25px;font-size:29px;font-weight:400;color:#222222;transform:scaleX(0.9888);">520351</span><div class="clip" style="left:1618px;top:508.9px;width:402.8px;height:100px"><span class="t lt" style="left:32.7px;top:25.35px;font-size:29px;font-weight:400;color:#222222;transform:scaleX(0.9353);">Product Announcement - Email 12 - Admin</span></div><span class="t lt" style="left:2357.8px;top:534.25px;font-size:29px;font-weight:400;color:#222222;transform:scaleX(0.8778);">0%</span><div class="clip" style="left:2720px;top:508.9px;width:74px;height:100px"><span class="t lt" style="left:63px;top:25.35px;font-size:29px;color:#222222">0</span></div><span class="t lt" style="left:31.9px;top:634.25px;font-size:29px;font-weight:400;color:#222222;transform:scaleX(0.9416);">June 24, 2025</span><span class="t lt" style="left:437px;top:634.25px;font-size:29px;font-weight:400;color:#222222;transform:scaleX(0.9417);">0</span><span class="t lt" style="left:841.4px;top:634.25px;font-size:29px;font-weight:400;color:#222222;transform:scaleX(0.9331);">Admin</span><span class="t lt" style="left:1246.8px;top:634.25px;font-size:29px;font-weight:400;color:#222222;transform:scaleX(0.9888);">707755</span><div class="clip" style="left:1618px;top:608.9px;width:402.8px;height:100px"><span class="t lt" style="left:32.7px;top:25.35px;font-size:29px;font-weight:400;color:#222222;transform:scaleX(0.9339);">Training Workshop Registration - Admin</span></div><span class="t lt" style="left:2357.8px;top:634.25px;font-size:29px;font-weight:400;color:#222222;transform:scaleX(0.8778);">0%</span><div class="clip" style="left:2720px;top:608.9px;width:74px;height:100px"><span class="t lt" style="left:63px;top:25.35px;font-size:29px;color:#222222">0</span></div><span class="t lt" style="left:31.9px;top:734.25px;font-size:29px;font-weight:400;color:#222222;transform:scaleX(0.9416);">June 24, 2025</span><span class="t lt" style="left:437px;top:734.25px;font-size:29px;font-weight:400;color:#222222;transform:scaleX(0.9417);">0</span><span class="t lt" style="left:841.4px;top:734.25px;font-size:29px;font-weight:400;color:#222222;transform:scaleX(0.9331);">Admin</span><span class="t lt" style="left:1246.8px;top:734.25px;font-size:29px;font-weight:400;color:#222222;transform:scaleX(0.9888);">586465</span><div class="clip" style="left:1618px;top:708.9px;width:402.8px;height:100px"><span class="t lt" style="left:32.7px;top:25.35px;font-size:29px;font-weight:400;color:#222222;transform:scaleX(0.9558);">Monthly Newsletter - December 2024</span></div><span class="t lt" style="left:2357.8px;top:734.25px;font-size:29px;font-weight:400;color:#222222;transform:scaleX(0.8778);">0%</span><div class="clip" style="left:2720px;top:708.9px;width:74px;height:100px"><span class="t lt" style="left:63px;top:25.35px;font-size:29px;color:#222222">0</span></div><span class="t lt" style="left:31.9px;top:834.25px;font-size:29px;font-weight:400;color:#222222;transform:scaleX(0.9416);">June 24, 2025</span><span class="t lt" style="left:437px;top:834.25px;font-size:29px;font-weight:400;color:#222222;transform:scaleX(0.9417);">0</span><span class="t lt" style="left:841.4px;top:834.25px;font-size:29px;font-weight:400;color:#222222;transform:scaleX(0.9331);">Admin</span><span class="t lt" style="left:1246.8px;top:834.25px;font-size:29px;font-weight:400;color:#222222;transform:scaleX(0.9888);">784390</span><div class="clip" style="left:1618px;top:808.9px;width:402.8px;height:100px"><span class="t lt" style="left:32.7px;top:25.35px;font-size:29px;font-weight:400;color:#222222;transform:scaleX(0.9842);">Monthly Newsletter - April 2025 - Admin</span></div><span class="t lt" style="left:2357.8px;top:834.25px;font-size:29px;font-weight:400;color:#222222;transform:scaleX(0.8778);">0%</span><div class="clip" style="left:2720px;top:808.9px;width:74px;height:100px"><span class="t lt" style="left:63px;top:25.35px;font-size:29px;color:#222222">0</span></div><span class="t lt" style="left:31.9px;top:934.25px;font-size:29px;font-weight:400;color:#222222;transform:scaleX(0.9416);">June 24, 2025</span><span class="t lt" style="left:437px;top:934.25px;font-size:29px;font-weight:400;color:#222222;transform:scaleX(0.9417);">0</span><span class="t lt" style="left:841.4px;top:934.25px;font-size:29px;font-weight:400;color:#222222;transform:scaleX(0.9331);">Admin</span><span class="t lt" style="left:1246.8px;top:934.25px;font-size:29px;font-weight:400;color:#222222;transform:scaleX(0.9888);">630766</span><div class="clip" style="left:1618px;top:908.9px;width:402.8px;height:100px"><span class="t lt" style="left:32.7px;top:25.35px;font-size:29px;font-weight:400;color:#222222;transform:scaleX(0.9267);">Welcome Series - Email 11 - Admin June</span></div><span class="t lt" style="left:2357.8px;top:934.25px;font-size:29px;font-weight:400;color:#222222;transform:scaleX(0.8778);">0%</span><div class="clip" style="left:2720px;top:908.9px;width:74px;height:100px"><span class="t lt" style="left:63px;top:25.35px;font-size:29px;color:#222222">0</span></div><span class="t lt" style="left:31.9px;top:1034.25px;font-size:29px;font-weight:400;color:#222222;transform:scaleX(0.9416);">June 24, 2025</span><span class="t lt" style="left:437px;top:1034.25px;font-size:29px;font-weight:400;color:#222222;transform:scaleX(0.9417);">0</span><span class="t lt" style="left:841.4px;top:1034.25px;font-size:29px;font-weight:400;color:#222222;transform:scaleX(0.9331);">Admin</span><span class="t lt" style="left:1246.8px;top:1034.25px;font-size:29px;font-weight:400;color:#222222;transform:scaleX(0.9888);">597470</span><div class="clip" style="left:1618px;top:1008.9px;width:402.8px;height:100px"><span class="t lt" style="left:32.7px;top:25.35px;font-size:29px;font-weight:400;color:#222222;transform:scaleX(0.9341);">Premium Customer Update - Admin June</span></div><span class="t lt" style="left:2357.8px;top:1034.25px;font-size:29px;font-weight:400;color:#222222;transform:scaleX(0.8778);">0%</span><div class="clip" style="left:2720px;top:1008.9px;width:74px;height:100px"><span class="t lt" style="left:63px;top:25.35px;font-size:29px;color:#222222">0</span></div><span class="t lt" style="left:31.9px;top:1134.25px;font-size:29px;font-weight:400;color:#222222;transform:scaleX(0.9416);">June 24, 2025</span><span class="t lt" style="left:437px;top:1134.25px;font-size:29px;font-weight:400;color:#222222;transform:scaleX(0.9417);">0</span><span class="t lt" style="left:841.4px;top:1134.25px;font-size:29px;font-weight:400;color:#222222;transform:scaleX(0.9331);">Admin</span><span class="t lt" style="left:1246.8px;top:1134.25px;font-size:29px;font-weight:400;color:#222222;transform:scaleX(0.9888);">542694</span><div class="clip" style="left:1618px;top:1108.9px;width:402.8px;height:100px"><span class="t lt" style="left:32.7px;top:25.35px;font-size:29px;font-weight:400;color:#222222;transform:scaleX(0.9353);">New Advanced Analytics Announcement</span></div><span class="t lt" style="left:2357.8px;top:1134.25px;font-size:29px;font-weight:400;color:#222222;transform:scaleX(0.8778);">0%</span><div class="clip" style="left:2720px;top:1108.9px;width:74px;height:100px"><span class="t lt" style="left:63px;top:25.35px;font-size:29px;color:#222222">0</span></div><span class="t lt" style="left:31.9px;top:1234.25px;font-size:29px;font-weight:400;color:#222222;transform:scaleX(0.9416);">June 24, 2025</span><span class="t lt" style="left:437px;top:1234.25px;font-size:29px;font-weight:400;color:#222222;transform:scaleX(0.9417);">0</span><span class="t lt" style="left:841.4px;top:1234.25px;font-size:29px;font-weight:400;color:#222222;transform:scaleX(0.9331);">Admin</span><span class="t lt" style="left:1246.8px;top:1234.25px;font-size:29px;font-weight:400;color:#222222;transform:scaleX(0.9888);">718721</span><div class="clip" style="left:1618px;top:1208.9px;width:402.8px;height:100px"><span class="t lt" style="left:32.7px;top:25.35px;font-size:29px;font-weight:400;color:#222222;transform:scaleX(0.9291);">Labor Day Special Offer - Admin June</span></div><span class="t lt" style="left:2357.8px;top:1234.25px;font-size:29px;font-weight:400;color:#222222;transform:scaleX(0.8778);">0%</span><div class="clip" style="left:2720px;top:1208.9px;width:74px;height:100px"><span class="t lt" style="left:63px;top:25.35px;font-size:29px;color:#222222">0</span></div></div><svg class="ic" style="left:3434px;top:1695px" width="22" height="21" viewBox="0 0 22 21"><path d="M22 0 A22 21 0 0 1 0 21 L22 21Z" fill="#8fab2e"/></svg><div class="a" style="left:128px;top:1660px;width:3328px;height:56px;background:radial-gradient(ellipse 1500px 52px at 1560px 62px,rgba(40,50,70,.085) 0%,rgba(40,50,70,.05) 45%,rgba(40,50,70,0) 100%)"></div><div class="a" style="left:502px;top:632px;width:960px;height:884px;background:#fff;border-radius:16px;box-shadow:0 9px 15px -4px rgba(0,0,0,.075),0 2px 5px rgba(0,0,0,.045),0 0 1.5px rgba(0,0,0,.08)"></div><svg class="ic" style="left:482px;top:640px;filter:drop-shadow(-1.5px 1px 1.5px rgba(0,0,0,.06))" width="24" height="48" viewBox="482 640 24 48"><path d="M503 648 L502 648 A8 8 0 0 1 499.66 653.66 L492.14 661.17 A4 4 0 0 0 492.14 666.83 L499.66 674.34 A8 8 0 0 1 502 680 L503 680Z" fill="#fff"/></svg><div class="a" style="left:502px;top:644px;width:6px;height:40px;background:#fff"></div><span class="t " style="left:558.3px;top:692.9px;font-size:21px;font-weight:400;color:#1f1f1f;transform:scaleX(0.9283);">Test Campaign Data</span><span class="t " style="left:556.8px;top:741.58px;font-size:25.2px;font-weight:400;color:#1f1f1f;transform:scaleX(0.9432);">Exclude data from campaigns with the <b>Test</b> tag applied</span><div class="a" style="left:1366px;top:735px;width:56px;height:32px;border-radius:16px;background:#bfbfbf"></div><div class="a" style="left:1370px;top:739px;width:24px;height:24px;border-radius:12px;background:#fff;box-shadow:0 4px 8px rgba(0,35,11,.2)"></div></body></html>
